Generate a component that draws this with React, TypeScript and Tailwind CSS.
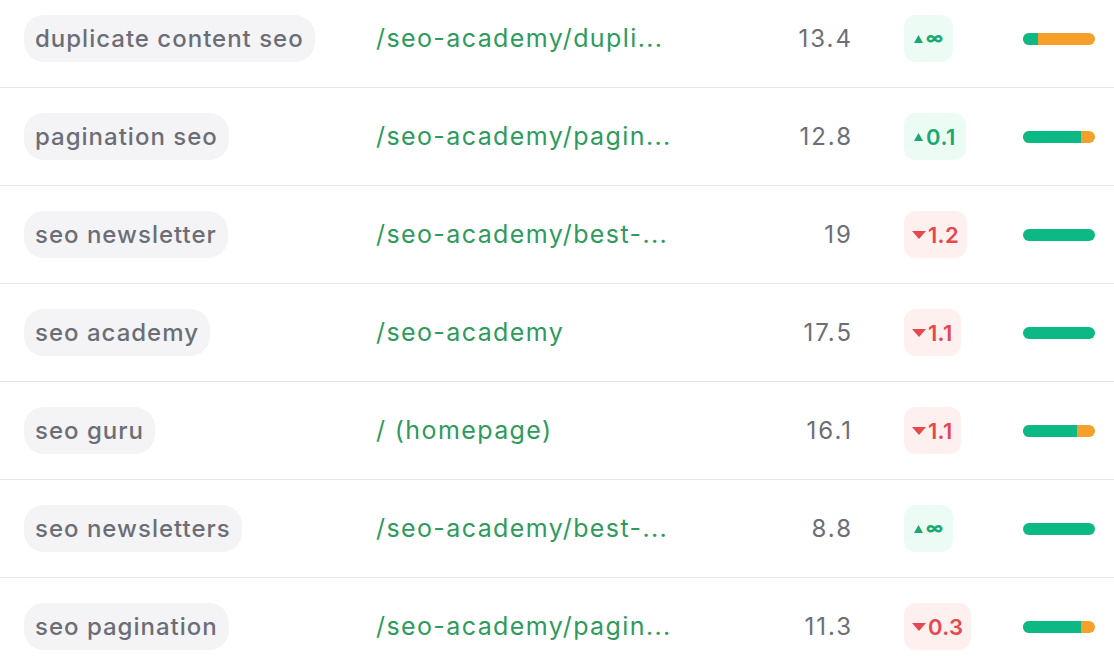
import React from 'react'

type Row = {
  keyword: string
  url: string
  volume: string
  change: string
  up: boolean
  green: number
}

const rows: Row[] = [
  { keyword: 'duplicate content seo', url: '/seo-academy/dupli...', volume: '13.4', change: '∞', up: true, green: 15 },
  { keyword: 'pagination seo', url: '/seo-academy/pagin...', volume: '12.8', change: '0.1', up: true, green: 58 },
  { keyword: 'seo newsletter', url: '/seo-academy/best-...', volume: '19', change: '1.2', up: false, green: 72 },
  { keyword: 'seo academy', url: '/seo-academy', volume: '17.5', change: '1.1', up: false, green: 72 },
  { keyword: 'seo guru', url: '/ (homepage)', volume: '16.1', change: '1.1', up: false, green: 54 },
  { keyword: 'seo newsletters', url: '/seo-academy/best-...', volume: '8.8', change: '∞', up: true, green: 72 },
  { keyword: 'seo pagination', url: '/seo-academy/pagin...', volume: '11.3', change: '0.3', up: false, green: 58 },
]

function ChangeBadge({ change, up }: { change: string; up: boolean }) {
  if (up) {
    const inf = change === '∞'
    return (
      <div className="flex h-[47px] items-center gap-[3px] rounded-[12px] bg-[#ecfcf5] px-[10px] text-[#17a96f]">
        <svg width="9" height="8" viewBox="0 0 9 8" className="mt-[1px]">
          <path d="M4.5 0 L9 8 L0 8 Z" fill="currentColor" />
        </svg>
        <span className={inf ? 'text-[17px] font-extrabold leading-none' : 'text-[22px] font-semibold leading-none tracking-[0.5px]'}>
          {change}
        </span>
      </div>
    )
  }
  return (
    <div className="flex h-[47px] items-center gap-[2px] rounded-[12px] bg-[#fff0f0] px-[8px] text-[#e5484d]">
      <svg width="14" height="8" viewBox="0 0 14 8" className="mt-[1px]">
        <path d="M0 0 L14 0 L7 8 Z" fill="currentColor" />
      </svg>
      <span className="text-[22px] font-semibold leading-none tracking-[0.3px]">{change}</span>
    </div>
  )
}

function Bar({ green }: { green: number }) {
  return (
    <div className="flex h-[12px] w-[72px] overflow-hidden rounded-full bg-[#f5a02a]">
      <div className="h-full bg-[#0cb985]" style={{ width: `${green}px` }} />
    </div>
  )
}

export default function App() {
  return (
    <div
      className="h-[658px] w-[1114px] overflow-hidden bg-white"
      style={{ fontFamily: 'Inter, "Noto Sans", sans-serif' }}
    >
      <div className="-mt-[10px]">
        {rows.map((r, i) => (
          <div
            key={i}
            className="flex h-[98px] items-center border-b border-[#e6e6e9] pl-[24px]"
          >
            <div className="w-[352px]">
              <span className="inline-flex h-[47px] items-center rounded-[20px] bg-[#f4f4f6] px-[11px] text-[24px] font-medium tracking-[1px] text-[#6c6e77]">
                {r.keyword}
              </span>
            </div>
            <div className="w-[380px] text-[25px] tracking-[1.4px] text-[#2e9a5e]">{r.url}</div>
            <div className="w-[97px] text-right text-[24px] tracking-[2px] text-[#6c6e77]">{r.volume}</div>
            <div className="ml-[51px] w-[119px]">
              <div className="inline-flex">
                <ChangeBadge change={r.change} up={r.up} />
              </div>
            </div>
            <Bar green={r.green} />
          </div>
        ))}
      </div>
    </div>
  )
}
